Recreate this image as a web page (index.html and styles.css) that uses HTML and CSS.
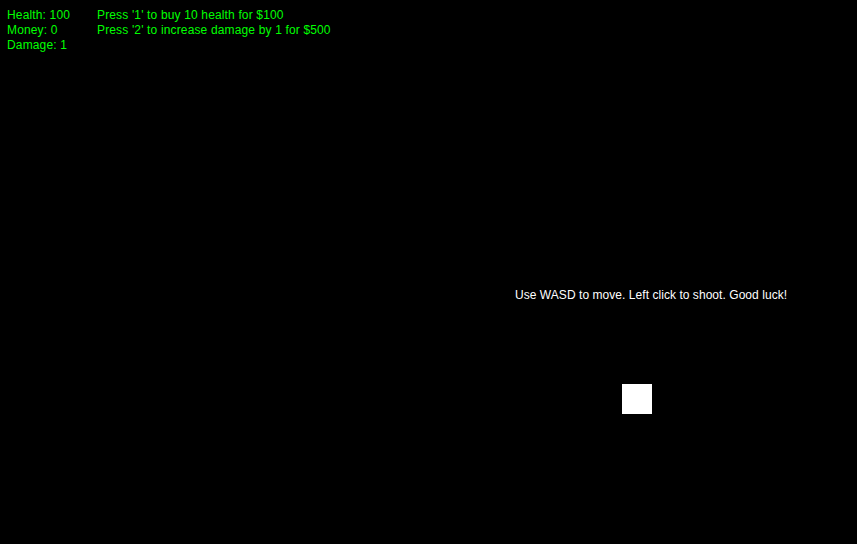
FILE: index.html
```html
<!DOCTYPE html>
<html>
<head>
<meta charset="utf-8">
<link rel="stylesheet" href="styles.css">
</head>
<body>
<div class="game">
  <div class="hud">
    <div class="stats">
      <div>Health: 100</div>
      <div>Money: 0</div>
      <div>Damage: 1</div>
    </div>
    <div class="shop">
      <div>Press '1' to buy 10 health for $100</div>
      <div>Press '2' to increase damage by 1 for $500</div>
    </div>
  </div>
  <div class="message">Use WASD to move. Left click to shoot. Good luck!</div>
  <div class="player"></div>
</div>
</body>
</html>
```
FILE: styles.css
```css
html, body {
  margin: 0;
  padding: 0;
  background: #000;
}
.game {
  position: relative;
  width: 857px;
  height: 544px;
  overflow: hidden;
  background: #000;
  font-family: "Liberation Sans", Arial, sans-serif;
  font-size: 12px;
  line-height: 15px;
}
.hud {
  display: flex;
  padding: 8px 0 0 7px;
  color: #00ff00;
  letter-spacing: 0.15px;
}
.stats {
  width: 90px;
}
.message {
  position: absolute;
  left: 515px;
  top: 288px;
  color: #fff;
  white-space: nowrap;
  letter-spacing: 0.05px;
}
.player {
  position: absolute;
  left: 622px;
  top: 384px;
  width: 30px;
  height: 30px;
  background: #fff;
}
```
